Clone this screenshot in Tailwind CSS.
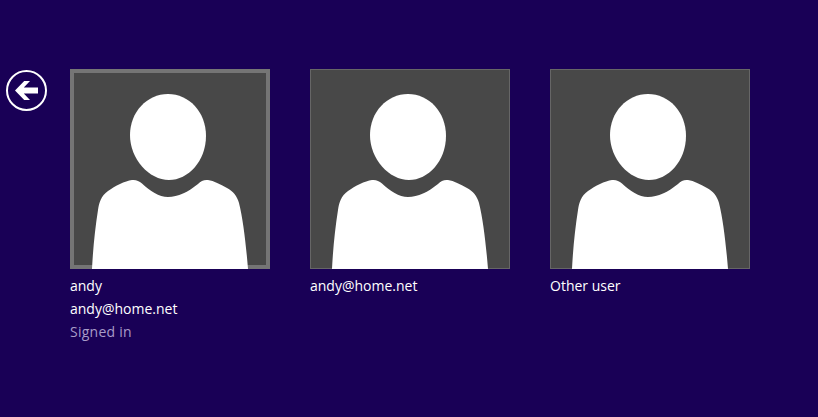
<!DOCTYPE html>
<html lang="en">

<head>
    <meta charset="UTF-8">
    <title>Switch user</title>
    <script src="https://cdn.jsdelivr.net/npm/@tailwindcss/browser@4"></script>
</head>

<body class="bg-[#190056] h-[417px] overflow-hidden font-['Open_Sans',sans-serif] text-white">
    <div class="flex pt-[69px] pl-[6px]">
        <!-- back button -->
        <div class="w-[64px] pt-[1px]">
            <svg width="41" height="41" viewBox="0 0 41 41">
                <circle cx="20.5" cy="20.5" r="19.5" fill="none" stroke="#fff" stroke-width="2" />
                <path d="M9 20.5 L18.2 11 H24 L17.8 17.6 H32 V23.4 H17.8 L24 30 H18.2 Z" fill="#fff" />
            </svg>
        </div>
        <div class="flex gap-10">
            <!-- current user -->
            <div class="w-[200px]">
                <svg class="block" width="200" height="200" viewBox="0 0 200 200">
                    <rect width="200" height="200" fill="#484848" />
                    <rect x="2" y="2" width="196" height="196" fill="none" stroke="#757575" stroke-width="4" />
                    <path d="M98 25 C119 25 136 43 136 67 C136 92 118 111 99 111 C79 111 60 90 60 66 C60 43 77 25 98 25 Z" fill="#fff" />
                    <path d="M22 200 C23 180 25 160 28 141 C29 134 31 127 38 122 C45 117 55 112 62 111 C66 110.5 69 112 72 114.5 C80 122 89 128 98 128 C108 128 118 123 128 115 C131 112 134 110.5 138 111 C144 112 150 115 157 119 C163 122 167 127 169 134 C173 150 176 175 178 200 Z" fill="#fff" />
                </svg>
                <p class="mt-[5px] text-[14px] leading-[23px]">andy</p>
                <p class="text-[14px] leading-[23px]">andy@home.net</p>
                <p class="text-[14px] leading-[23px] tracking-[0.25px] text-[#a89cc8]">Signed in</p>
            </div>
            <!-- other account -->
            <div class="w-[200px]">
                <svg class="block" width="200" height="200" viewBox="0 0 200 200">
                    <rect width="200" height="200" fill="#484848" />
                    <rect x="0.5" y="0.5" width="199" height="199" fill="none" stroke="#666" />
                    <path d="M98 25 C119 25 136 43 136 67 C136 92 118 111 99 111 C79 111 60 90 60 66 C60 43 77 25 98 25 Z" fill="#fff" />
                    <path d="M22 200 C23 180 25 160 28 141 C29 134 31 127 38 122 C45 117 55 112 62 111 C66 110.5 69 112 72 114.5 C80 122 89 128 98 128 C108 128 118 123 128 115 C131 112 134 110.5 138 111 C144 112 150 115 157 119 C163 122 167 127 169 134 C173 150 176 175 178 200 Z" fill="#fff" />
                </svg>
                <p class="mt-[5px] text-[14px] leading-[23px]">andy@home.net</p>
            </div>
            <!-- other user -->
            <div class="w-[200px]">
                <svg class="block" width="200" height="200" viewBox="0 0 200 200">
                    <rect width="200" height="200" fill="#484848" />
                    <rect x="0.5" y="0.5" width="199" height="199" fill="none" stroke="#666" />
                    <path d="M98 25 C119 25 136 43 136 67 C136 92 118 111 99 111 C79 111 60 90 60 66 C60 43 77 25 98 25 Z" fill="#fff" />
                    <path d="M22 200 C23 180 25 160 28 141 C29 134 31 127 38 122 C45 117 55 112 62 111 C66 110.5 69 112 72 114.5 C80 122 89 128 98 128 C108 128 118 123 128 115 C131 112 134 110.5 138 111 C144 112 150 115 157 119 C163 122 167 127 169 134 C173 150 176 175 178 200 Z" fill="#fff" />
                </svg>
                <p class="mt-[5px] text-[14px] leading-[23px]">Other user</p>
            </div>
        </div>
    </div>
</body>

</html>
